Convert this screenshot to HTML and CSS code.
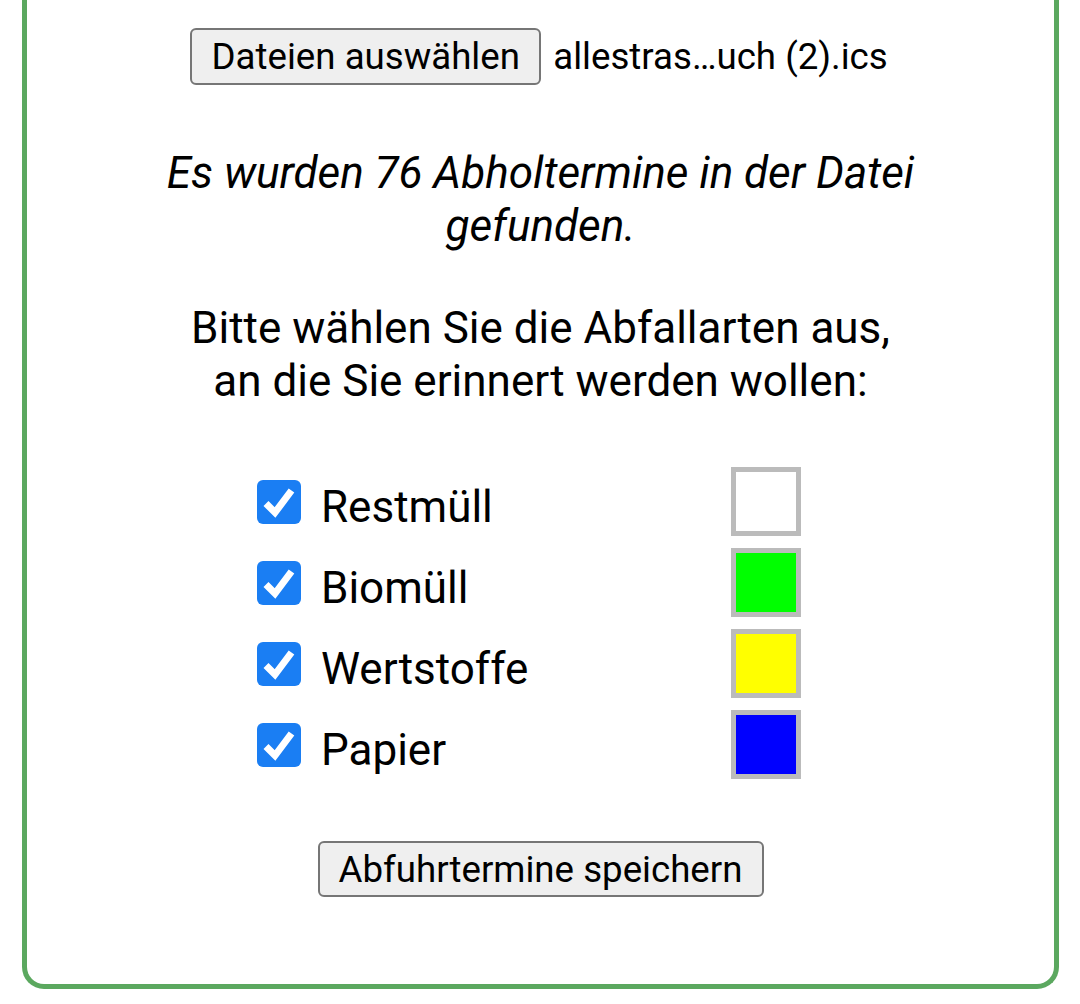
FILE: index.html
```html
<!DOCTYPE html>
<html lang="de">
<head>
<meta charset="utf-8">
<title>Abfuhrtermine</title>
<link rel="stylesheet" href="styles.css">
</head>
<body>
<div class="card">
  <div class="file-row">
    <button class="btn btn-file">Dateien auswählen</button>
    <span class="file-name">allestras…uch (2).ics</span>
  </div>
  <p class="found">Es wurden 76 Abholtermine in der Datei gefunden.</p>
  <p class="prompt">Bitte wählen Sie die Abfallarten aus,<br>an die Sie erinnert werden wollen:</p>
  <div class="types">
    <div class="type-row">
      <label class="type-label"><span class="check"><svg viewBox="0 0 44 44" width="44" height="44"><polyline points="9,23.5 18,32.5 34.5,10.5" fill="none" stroke="#fff" stroke-width="7" stroke-linecap="butt" stroke-linejoin="miter"/></svg></span><span class="type-text">Restmüll</span></label>
      <span class="swatch swatch-white"></span>
    </div>
    <div class="type-row">
      <label class="type-label"><span class="check"><svg viewBox="0 0 44 44" width="44" height="44"><polyline points="9,23.5 18,32.5 34.5,10.5" fill="none" stroke="#fff" stroke-width="7" stroke-linecap="butt" stroke-linejoin="miter"/></svg></span><span class="type-text">Biomüll</span></label>
      <span class="swatch swatch-green"></span>
    </div>
    <div class="type-row">
      <label class="type-label"><span class="check"><svg viewBox="0 0 44 44" width="44" height="44"><polyline points="9,23.5 18,32.5 34.5,10.5" fill="none" stroke="#fff" stroke-width="7" stroke-linecap="butt" stroke-linejoin="miter"/></svg></span><span class="type-text">Wertstoffe</span></label>
      <span class="swatch swatch-yellow"></span>
    </div>
    <div class="type-row">
      <label class="type-label"><span class="check"><svg viewBox="0 0 44 44" width="44" height="44"><polyline points="9,23.5 18,32.5 34.5,10.5" fill="none" stroke="#fff" stroke-width="7" stroke-linecap="butt" stroke-linejoin="miter"/></svg></span><span class="type-text">Papier</span></label>
      <span class="swatch swatch-blue"></span>
    </div>
  </div>
  <button class="btn btn-save">Abfuhrtermine speichern</button>
</div>
</body>
</html>
```

FILE: styles.css
```css
html, body {
  margin: 0;
  padding: 0;
  background: #fff;
}

body {
  font-family: Roboto, "Liberation Sans", sans-serif;
  color: #000;
  height: 1004px;
  overflow: hidden;
}

.card {
  margin: 0 21px 0 22px;
  height: 989px;
  box-sizing: border-box;
  border: 5px solid #5ba85f;
  border-top: none;
  border-radius: 0 0 22px 22px;
  display: flex;
  flex-direction: column;
  align-items: center;
}

.file-row {
  display: flex;
  align-items: center;
  margin-top: 28px;
  margin-left: -3px;
}

.btn {
  font-family: Roboto, "Liberation Sans", sans-serif;
  font-size: 36.67px;
  color: #000;
  background: #efefef;
  border: 2px solid #767676;
  border-radius: 6px;
  box-sizing: border-box;
  padding: 0;
  display: flex;
  align-items: center;
  justify-content: center;
}

.btn-file {
  width: 351px;
  height: 57px;
}

.file-name {
  font-size: 36.67px;
  margin-left: 12px;
}

.found {
  font-style: italic;
  font-size: 44px;
  line-height: 53px;
  text-align: center;
  width: 800px;
  margin: 62px 0 0 0;
}

.prompt {
  font-size: 44px;
  line-height: 53px;
  text-align: center;
  margin: 49px 0 0 0;
}

.types {
  display: flex;
  flex-direction: column;
  gap: 12px;
  margin-top: 59px;
  width: 544px;
  margin-left: -23px;
}

.type-row {
  display: flex;
  justify-content: space-between;
  align-items: center;
  height: 69px;
}

.type-label {
  display: flex;
  align-items: center;
  gap: 20px;
  font-size: 44px;
}

.type-text {
  padding-top: 11px;
}

.check {
  width: 44px;
  height: 44px;
  background: #1a7ef3;
  border-radius: 6px;
  display: flex;
}

.swatch {
  width: 70px;
  height: 69px;
  box-sizing: border-box;
  border: 5px solid #bbbbbb;
}

.swatch-white { background: #fff; }
.swatch-green { background: #00ff00; }
.swatch-yellow { background: #ffff00; }
.swatch-blue { background: #0000ff; }

.btn-save {
  width: 446px;
  height: 56px;
  margin-top: 62px;
}
```
